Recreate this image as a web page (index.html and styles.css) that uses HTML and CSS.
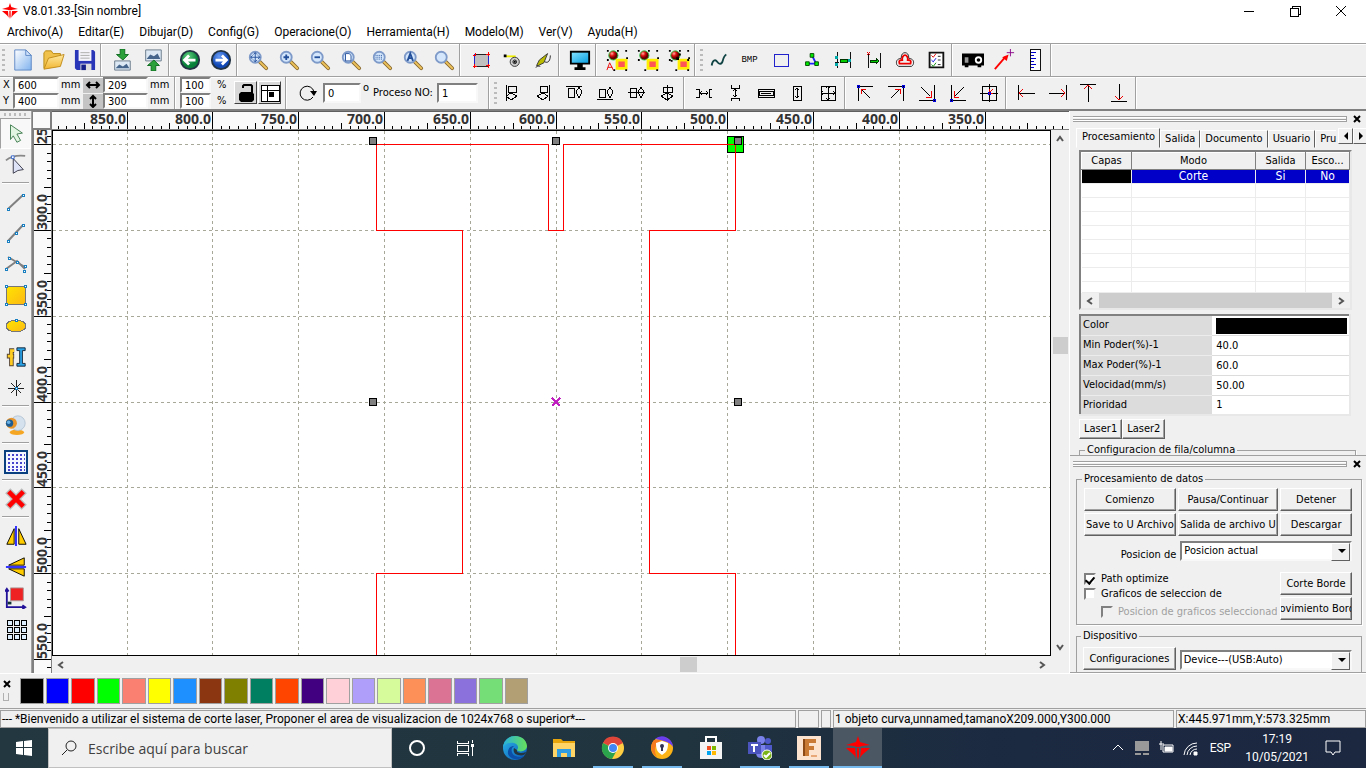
FILE: index.html
```html
<!DOCTYPE html>
<html lang="es">
<head>
  <meta charset="UTF-8">
  <title>V8.01.33-[Sin nombre]</title>
  <meta name="viewport" content="width=device-width, initial-scale=1">
  <link rel="stylesheet" href="styles.css">
</head>
<body>
<!-- Símbolos reutilizados -->
<svg class="defs" aria-hidden="true">
  <defs>
    <linearGradient id="gPage" x1="0" y1="0" x2="1" y2="1"><stop offset="0" stop-color="#fff"/><stop offset="1" stop-color="#7fb2ee"/></linearGradient>
    <linearGradient id="gFolder" x1="0" y1="0" x2="0" y2="1"><stop offset="0" stop-color="#ffe9a0"/><stop offset="1" stop-color="#f2b632"/></linearGradient>
    <linearGradient id="gYellow" x1="0" y1="0" x2="1" y2="1"><stop offset="0" stop-color="#ffe600"/><stop offset="1" stop-color="#fdb813"/></linearGradient>
    <linearGradient id="gScreen" x1="0" y1="0" x2="1" y2="1"><stop offset="0" stop-color="#7fe0ff"/><stop offset="1" stop-color="#0a9fe0"/></linearGradient>
    <radialGradient id="gRed" cx=".35" cy=".3"><stop offset="0" stop-color="#ffb0a0"/><stop offset=".5" stop-color="#e01010"/><stop offset="1" stop-color="#600"/></radialGradient>
    <radialGradient id="gGreen" cx=".4" cy=".3"><stop offset="0" stop-color="#5fd07f"/><stop offset="1" stop-color="#07803a"/></radialGradient>
    <radialGradient id="gBlue" cx=".4" cy=".3"><stop offset="0" stop-color="#6a9df5"/><stop offset="1" stop-color="#0f47b5"/></radialGradient>
    <linearGradient id="gEdge" x1="0" y1="0" x2="1" y2="1"><stop offset="0" stop-color="#2bb8e8"/><stop offset="1" stop-color="#0a55b5"/></linearGradient>
    <linearGradient id="gEdge2" x1="0" y1="0" x2="1" y2="0"><stop offset="0" stop-color="#27b0dc"/><stop offset="1" stop-color="#67e05a"/></linearGradient>
  </defs>
  <symbol id="lens" viewBox="0 0 24 24">
    <path d="M14 14l7 7" stroke="#8a6a30" stroke-width="4" stroke-linecap="round"/>
    <path d="M14 14l7 7" stroke="#eec35c" stroke-width="2" stroke-linecap="round"/>
    <circle cx="9" cy="9" r="6" fill="#d3e6fb" stroke="#7e9ac9" stroke-width="2"/>
  </symbol>
  <symbol id="star" viewBox="0 0 24 24">
    <path d="M12 0l2 6 10 3-8 1-3 1h-2l-3-1-8-1 10-3z" fill="#f00"/>
    <path d="M0 12h9l1 10C8 18 4 16 0 12zM24 12h-9l-1 10c2-4 6-6 10-10zM11 12h2v8l-1 4-1-4z" fill="#f00"/>
  </symbol>
  <symbol id="group" viewBox="0 0 24 24">
    <circle cx="8" cy="7" r="5" fill="url(#gRed)" stroke="#2c4" stroke-width="1"/>
    <path d="M12 12h10v9H12z" fill="#f55" stroke="#fe0" stroke-width="3"/>
    <path d="M1 1h2v2H1zM12 1h2v2h-2zM21 1h2v2h-2zM1 11h2v2H1zM22 9h2v2h-2zM8 22h2v2H8zM21 22h2v2h-2z"/>
  </symbol>
</svg>

<header class="titlebar">
  <svg class="app-logo" viewBox="0 0 24 24"><use href="#star"/></svg>
  <span class="title">V8.01.33-[Sin nombre]</span>
  <div class="window-buttons">
    <button aria-label="Minimizar"><svg viewBox="0 0 12 12"><path d="M1 6h10"/></svg></button>
    <button aria-label="Restaurar"><svg viewBox="0 0 12 12"><path d="M1 3h8v8H1zM3 3V1h8v8H9"/></svg></button>
    <button aria-label="Cerrar"><svg viewBox="0 0 12 12"><path d="M1 1l10 10M11 1L1 11" shape-rendering="auto"/></svg></button>
  </div>
</header>

<nav class="menu" aria-label="Menú principal">
  <a href="#">Archivo(A)</a><a href="#">Editar(E)</a><a href="#">Dibujar(D)</a><a href="#">Config(G)</a><a href="#">Operacione(O)</a><a href="#">Herramienta(H)</a><a href="#">Modelo(M)</a><a href="#">Ver(V)</a><a href="#">Ayuda(H)</a>
</nav>

<!-- Barra de herramientas estándar -->
<div class="toolbar">
  <i class="grip"></i>
  <button class="tool" aria-label="Nuevo"><svg viewBox="0 0 24 24"><path d="M3 1h12l6 6v16H3z" fill="url(#gPage)" stroke="#5b86c4"/><path d="M15 1v6h6z" fill="#cfe3fb" stroke="#5b86c4"/></svg></button>
  <button class="tool" aria-label="Abrir"><svg viewBox="0 0 24 24"><path d="M1 21V4l2-2h6l2 3h8v4" fill="#f0c24c" stroke="#b8860b"/><path d="M1 22L6 10l17-4-4 13z" fill="url(#gFolder)" stroke="#c08a18"/></svg></button>
  <button class="tool" aria-label="Guardar"><svg viewBox="0 0 24 24"><path d="M1 1h20l2 2v20H3l-2-2z" fill="#2a36b8"/><path d="M5 1h14v12H5z" fill="#f4f4fa"/><path d="M7 4h10M7 7h10M7 10h10" stroke="#aaa"/><path d="M7 16h12v7H7z" fill="#ddd"/><path d="M8 17h5v6H8z" fill="#16208a"/></svg></button>
  <i class="sep"></i>
  <button class="tool" aria-label="Importar"><svg viewBox="0 0 24 24"><path d="M4 13h17v10H4z" fill="#dce8f4" stroke="#678"/><path d="M5 21l4-4 4 2 4-3 3 5z" fill="#46658c"/><path d="M10 0h5v6h4l-6 6-7-6h4z" fill="#2ca03a" stroke="#0a6a1c"/></svg></button>
  <button class="tool" aria-label="Exportar"><svg viewBox="0 0 24 24"><path d="M4 1h17v12H4z" fill="#dce8f4" stroke="#678"/><path d="M5 11l4-5 4 2 4-3 3 6z" fill="#46658c"/><path d="M10 24h5v-6h4l-6-6-7 6h4z" fill="#2ca03a" stroke="#0a6a1c"/></svg></button>
  <i class="sep"></i>
  <button class="tool" aria-label="Deshacer"><svg viewBox="0 0 24 24"><circle cx="12" cy="12" r="10" fill="url(#gGreen)" stroke="#234" stroke-width="2"/><path d="M18 12H7M11 7l-5 5 5 5" fill="none" stroke="#fff" stroke-width="3"/></svg></button>
  <button class="tool" aria-label="Rehacer"><svg viewBox="0 0 24 24"><circle cx="12" cy="12" r="10" fill="url(#gBlue)" stroke="#234" stroke-width="2"/><path d="M6 12h11M13 7l5 5-5 5" fill="none" stroke="#fff" stroke-width="3"/></svg></button>
  <i class="sep"></i>
  <button class="tool" aria-label="Mover vista"><svg viewBox="0 0 24 24"><use href="#lens"/><path d="M9 4v10M4 9h10M7 6l2-2 2 2M7 12l2 2 2-2M6 7L4 9l2 2M12 7l2 2-2 2" fill="none" stroke="#234f9a"/></svg></button>
  <button class="tool" aria-label="Acercar"><svg viewBox="0 0 24 24"><use href="#lens"/><path d="M9 6v6M6 9h6" stroke="#234f9a" stroke-width="2"/></svg></button>
  <button class="tool" aria-label="Alejar"><svg viewBox="0 0 24 24"><use href="#lens"/><path d="M6 9h6" stroke="#234f9a" stroke-width="2"/></svg></button>
  <button class="tool" aria-label="Ver página"><svg viewBox="0 0 24 24"><use href="#lens"/><path d="M6 5h4l2 2v6H6z" fill="#fff" stroke="#234f9a"/></svg></button>
  <button class="tool" aria-label="Ver mesa"><svg viewBox="0 0 24 24"><use href="#lens"/><path d="M5 7h8M5 9h8M5 11h8" stroke="#234f9a" stroke-dasharray="1 1"/></svg></button>
  <button class="tool" aria-label="Ver todo"><svg viewBox="0 0 24 24"><use href="#lens"/><path d="M6 13l3-8 3 8M7 10h4" fill="none" stroke="#234f9a" stroke-width="2"/></svg></button>
  <button class="tool" aria-label="Zoom"><svg viewBox="0 0 24 24"><use href="#lens"/></svg></button>
  <i class="sep"></i>
  <button class="tool" aria-label="Marco"><svg viewBox="0 0 24 24" class="px"><path d="M5 6h14v12H5z" fill="#c0c0c0" stroke="#22c"/><path d="M6 6h13M6 18h13" stroke="#222"/><path d="M4 7h3M6 5v3M17 6h4M19 4v4M4 18h4M5 16v4M17 17h4M19 16v4" stroke="#f00"/></svg></button>
  <button class="tool" aria-label="Trayectoria"><svg viewBox="0 0 24 24"><path d="M5 8h11" stroke="#ee0" stroke-width="2"/><circle cx="15" cy="14" r="5" fill="#ccc" stroke="#333"/><circle cx="15" cy="14" r="2" fill="none" stroke="#111"/><path d="M3 6h3v3H3zM14 13h2v2h-2z"/></svg></button>
  <button class="tool" aria-label="Simular"><svg viewBox="0 0 24 24"><path d="M5 18l3-6 9-7-4 10-6 3z" fill="#bb0" stroke="#333"/><path d="M4 20c3-2 4-1 5-1M14 14c4 2 6-2 6-7" fill="none" stroke="#222"/></svg></button>
  <i class="sep"></i>
  <button class="tool" aria-label="Vista previa"><svg viewBox="0 0 24 24"><path d="M1 2h22v15H1zM9 17h6v3h3v3H6v-3h3z"/><path d="M3 4h18v11H3z" fill="url(#gScreen)"/></svg></button>
  <i class="sep"></i>
  <button class="tool" aria-label="Agrupar automático"><svg viewBox="0 0 24 24"><use href="#group"/><path d="M1 23l3-8 4 8M2 20h5" fill="none" stroke="#e00"/></svg></button>
  <button class="tool" aria-label="Agrupar"><svg viewBox="0 0 24 24"><use href="#group"/></svg></button>
  <button class="tool" aria-label="Desagrupar"><svg viewBox="0 0 24 24"><use href="#group"/><path d="M12 5h2v2h-2zM3 12h2v2H3zM9 9h3v3H9zM21 11h2v2h-2z"/></svg></button>
  <i class="sep"></i>
  <i class="grip"></i>
  <button class="tool" aria-label="Curva suave"><svg viewBox="0 0 24 24"><path d="M4 18c1-6 4-7 6-4s5 3 6-1 2-6 4-7" fill="none" stroke="#144" stroke-width="2"/></svg></button>
  <button class="tool bmp" aria-label="Mapa de bits">BMP</button>
  <button class="tool" aria-label="Rectángulo"><svg viewBox="0 0 24 24" class="px"><path d="M5 6h14v12H5z" fill="none" stroke="#22c"/></svg></button>
  <button class="tool" aria-label="Nodos"><svg viewBox="0 0 24 24"><path d="M12 7l4 8M7 16h10" stroke="#22f" stroke-width="2"/><path d="M10 5h4v4h-4zM5 14h4v4H5zM15 14h4v4h-4z" fill="#0e0" stroke="#040"/></svg></button>
  <button class="tool" aria-label="Separar"><svg viewBox="0 0 24 24" class="px"><path d="M6 4v16M19 4v16M4 14h4" stroke="#111"/><path d="M9 11h7v3H9z" fill="#0c0" stroke="#030"/><path d="M4 8h3v3H4zM4 15h3v3H4zM17 11h3v3h-3z" fill="#0aa"/></svg></button>
  <button class="tool" aria-label="Entrada"><svg viewBox="0 0 24 24" class="px"><path d="M6 5v15M18 5v15" stroke="#111"/><path d="M8 12h6v-2l3 3-3 3v-2H8z" fill="#0c0" stroke="#030"/><path d="M5 4l3 3M8 4L5 7" stroke="#e00"/></svg></button>
  <button class="tool" aria-label="Desfase"><svg viewBox="0 0 24 24"><path d="M8 10C7 2 17 2 16 10c5 1 6 3 5 7l-2 2H5l-2-2c-1-4 0-6 5-7z" fill="none" stroke="#222"/><path d="M9 12c-1-7 7-7 6 0 3 0 4 1 3 4H6c-1-3 0-4 3-4z" fill="none" stroke="#e00" stroke-width="2"/></svg></button>
  <button class="tool" aria-label="Comprobar"><svg viewBox="0 0 24 24"><path d="M5 4h15v16H5z" fill="#fff" stroke="#111" stroke-width="2"/><path d="M7 7l2 2 3-4" stroke="#d00" fill="none"/><path d="M7 12l2 2 3-4" stroke="#00d" fill="none"/><path d="M7 17l2 2 3-4" stroke="#080" fill="none"/><path d="M14 8h3M14 12h3M14 17h3" stroke="#222"/></svg></button>
  <i class="sep"></i>
  <button class="tool" aria-label="Láser"><svg viewBox="0 0 24 24"><path d="M0 5h24v13h-3v2h-4v-2H7v2H3v-2H0z"/><path d="M3 9h4v6H3z" fill="#999"/><circle cx="18" cy="12" r="4" fill="#fff"/><circle cx="18" cy="12" r="2"/></svg></button>
  <button class="tool" aria-label="Origen"><svg viewBox="0 0 24 24"><path d="M2 22L14 8" stroke="#f00" stroke-width="2"/><path d="M17 6l-7 3 5 4z" fill="#f00"/><path d="M19 0v8M15 4h8" stroke="#808"/></svg></button>
  <button class="tool" aria-label="Medir"><svg viewBox="0 0 24 24" class="px"><path d="M7 1h10v21H7z" fill="#fff" stroke="#111"/><path d="M8 4h5M8 7h3M8 10h5M8 13h3M8 16h5M8 19h3" stroke="#00c"/></svg></button>
  <i class="sep"></i>
</div>

<!-- Posición, tamaño y alineación -->
<div class="toolbar second">
  <div class="coords">
    <label for="posx">X</label><input id="posx" value="600"><span>mm</span>
    <button class="flat" aria-label="Ancho"><svg viewBox="0 0 16 14"><path d="M2 7h12M5 4L2 7l3 3M11 4l3 3-3 3" fill="none" stroke="#000" stroke-width="2"/></svg></button>
    <input aria-label="Ancho" value="209"><span>mm</span>
    <label for="posy">Y</label><input id="posy" value="400"><span>mm</span>
    <button class="flat" aria-label="Alto"><svg viewBox="0 0 16 14"><path d="M8 2v11M5 5l3-3 3 3M5 10l3 3 3-3" fill="none" stroke="#000" stroke-width="2"/></svg></button>
    <input aria-label="Alto" value="300"><span>mm</span>
  </div>
  <i class="sep"></i>
  <div class="percent">
    <input aria-label="Escala X" value="100"><span>%</span>
    <input aria-label="Escala Y" value="100"><span>%</span>
  </div>
  <button class="raised" aria-label="Bloquear proporción"><svg viewBox="0 0 20 20"><path d="M7 5V3l1-1h7l1 1v7" fill="none" stroke="#000" stroke-width="2"/><path d="M3 11l2-2h11l2 2v6l-2 2H5l-2-2z"/></svg></button>
  <button class="raised" aria-label="Punto de referencia"><svg viewBox="0 0 20 20" class="px"><path d="M1 2h18v16H1z" fill="#fff" stroke="#000"/><path d="M1 7h18M7 2v16" stroke="#000"/><path d="M9 9h5v5H9z"/></svg></button>
  <i class="sep"></i>
  <div class="rotate">
    <svg viewBox="0 0 20 20"><path d="M16 14a7 7 0 1 1 1-5" fill="none" stroke="#000"/><path d="M13 8h7l-3 5z"/></svg>
    <input aria-label="Ángulo" value="0"><span class="deg">o</span>
    <label for="proc">Proceso NO:</label><input id="proc" value="1">
  </div>
  <i class="sep"></i>
  <i class="grip"></i>
  <button class="tool" aria-label="Alinear izquierda"><svg viewBox="0 0 24 24" class="line"><path d="M6 4v16M8 5h8v6H8zM6 15l5-3 6 3-6 4z"/></svg></button>
  <button class="tool" aria-label="Alinear derecha"><svg viewBox="0 0 24 24" class="line"><path d="M18 4v16M9 5h7v6H9zM6 15l6-3 5 3-5 4z"/></svg></button>
  <button class="tool" aria-label="Alinear arriba"><svg viewBox="0 0 24 24" class="line"><path d="M4 5h16M6 7h6v9H6zM17 6l3 5-3 6-3-6z"/></svg></button>
  <button class="tool" aria-label="Alinear abajo"><svg viewBox="0 0 24 24" class="line"><path d="M4 18h16M6 8h6v8H6zM17 6l3 5-3 6-3-6z"/></svg></button>
  <button class="tool" aria-label="Centrar horizontal"><svg viewBox="0 0 24 24" class="line"><path d="M4 11h17M6 7h6v9H6zM17 6l3 5-3 6-3-6z"/></svg></button>
  <button class="tool" aria-label="Centrar vertical"><svg viewBox="0 0 24 24" class="line"><path d="M12 4v16M8 6h9v5H8zM6 15l6-3 6 3-6 4z"/></svg></button>
  <i class="sep"></i>
  <button class="tool" aria-label="Espaciado horizontal"><svg viewBox="0 0 24 24" class="line"><path d="M4 8h3v8H4M20 8h-3v8h3M8 12h8M10 10l-2 2 2 2M14 10l2 2-2 2"/></svg></button>
  <button class="tool" aria-label="Espaciado vertical"><svg viewBox="0 0 24 24" class="line"><path d="M8 4v3h8V4M8 20v-3h8v3M12 8v8M10 10l2-2 2 2M10 14l2 2 2-2"/></svg></button>
  <button class="tool" aria-label="Mismo ancho"><svg viewBox="0 0 24 24" class="line"><path d="M4 8h16v8H4zM5 10h14v4H5zM7 12h10"/></svg></button>
  <button class="tool" aria-label="Mismo alto"><svg viewBox="0 0 24 24" class="line"><path d="M8 5h8v14H8zM12 7v10M10 9l2-2 2 2M10 15l2 2 2-2"/></svg></button>
  <button class="tool" aria-label="Mismo tamaño"><svg viewBox="0 0 24 24" class="line"><path d="M5 5h14v14H5zM12 5v14M5 12h14M10 7l2-2 2 2M10 17l2 2 2-2M7 10l-2 2 2 2M17 10l2 2-2 2"/></svg></button>
  <i class="sep"></i>
  <button class="tool" aria-label="Superior izquierda"><svg viewBox="0 0 24 24" class="line"><path d="M5 20V5h15M17 17L9 9"/><path d="M8 13V8h5" stroke="#e00"/><path d="M4 4h2v2H4z" stroke="#00d"/></svg></button>
  <button class="tool" aria-label="Superior derecha"><svg viewBox="0 0 24 24" class="line"><path d="M4 5h15v15M7 17l8-8"/><path d="M11 8h5v5" stroke="#e00"/><path d="M18 4h2v2h-2z" stroke="#00d"/></svg></button>
  <button class="tool" aria-label="Inferior derecha"><svg viewBox="0 0 24 24" class="line"><path d="M19 4v15H4M6 6l9 9"/><path d="M16 10v6h-5" stroke="#e00"/><path d="M18 18h2v2h-2z" stroke="#00d"/></svg></button>
  <button class="tool" aria-label="Inferior izquierda"><svg viewBox="0 0 24 24" class="line"><path d="M5 4v15h15M18 6l-9 9"/><path d="M8 10v6h5" stroke="#e00"/><path d="M4 18h2v2H4z" stroke="#00d"/></svg></button>
  <button class="tool" aria-label="Al centro"><svg viewBox="0 0 24 24" class="line"><path d="M5 5h14v14H5zM12 3v18M3 12h18"/><path d="M12 12l4-4M12 8v4h4" stroke="#e00"/><path d="M11 11h2v2h-2z" stroke="#00d"/></svg></button>
  <i class="sep"></i>
  <button class="tool" aria-label="Mover a la izquierda"><svg viewBox="0 0 24 24" class="line"><path d="M4 4v15M5 12h16"/><path d="M9 8l-4 4 4 4" stroke="#e00"/></svg></button>
  <button class="tool" aria-label="Mover a la derecha"><svg viewBox="0 0 24 24" class="line"><path d="M21 4v15M4 12h16"/><path d="M16 8l4 4-4 4" stroke="#e00"/></svg></button>
  <button class="tool" aria-label="Mover arriba"><svg viewBox="0 0 24 24" class="line"><path d="M4 3h16M12 4v17"/><path d="M8 8l4-4 4 4" stroke="#e00"/></svg></button>
  <button class="tool" aria-label="Mover abajo"><svg viewBox="0 0 24 24" class="line"><path d="M4 20h16M12 3v16"/><path d="M8 15l4 4 4-4" stroke="#e00"/></svg></button>
  <i class="sep"></i>
</div>

<main class="main">
  <!-- Herramientas de dibujo -->
  <div class="sidebar">
    <i class="grip"></i>
    <button class="tool pressed" aria-label="Seleccionar"><svg viewBox="0 0 24 24"><path d="M6 2l13 9-6 1 4 7-4 2-4-7-3 4z" fill="#e2f5e2" stroke="#3c7a4c"/></svg></button>
    <button class="tool" aria-label="Editar nodos"><svg viewBox="0 0 24 24"><path d="M1 7c6-5 12-6 21-5" fill="none" stroke="#888" stroke-width="2"/><path d="M9 5l11 12-6 1-5 3z" fill="#dfe3f7" stroke="#334"/><path d="M7 2h3v3H7z" fill="#fff" stroke="#36c"/></svg></button>
    <i class="sep"></i>
    <button class="tool" aria-label="Línea"><svg viewBox="0 0 24 24" class="node"><path d="M4 19L19 5" class="seg"/><path d="M3 18h2v2H3zM18 4h2v2h-2z"/></svg></button>
    <button class="tool" aria-label="Polilínea"><svg viewBox="0 0 24 24" class="node"><path d="M4 20L19 4" class="seg"/><path d="M3 19h2v2H3zM11 11h2v2h-2zM18 3h2v2h-2z"/></svg></button>
    <button class="tool" aria-label="Curva"><svg viewBox="0 0 24 24" class="node"><path d="M2 17L13 9l8 8M4 5l17 10" class="seg"/><path d="M1 16h2v2H1zM4 5h2v2H4zM12 9h2v2h-2zM20 13h2v2h-2zM19 18h2v2h-2z"/></svg></button>
    <button class="tool" aria-label="Rectángulo"><svg viewBox="0 0 24 24" class="node"><path d="M2 3h19v18H2z" class="fill"/><path d="M1 2h2v2H1zM20 2h2v2h-2zM1 20h2v2H1zM20 20h2v2h-2z"/></svg></button>
    <button class="tool" aria-label="Elipse"><svg viewBox="0 0 24 24" class="node"><ellipse cx="12" cy="12" rx="10" ry="6" class="fill"/><path d="M11 5h2v2h-2z"/></svg></button>
    <button class="tool" aria-label="Texto"><svg viewBox="0 0 24 24"><path d="M13 2h9v3h-3v14h3v3h-9v-3h3V5h-3z" fill="#29a3e8" stroke="#123"/><path d="M10 5H7v17M2 11h8" stroke="#543" stroke-width="5" fill="none"/><path d="M10 5H7v16M3 11h6" stroke="#fc2" stroke-width="3" fill="none"/></svg></button>
    <button class="tool" aria-label="Punto"><svg viewBox="0 0 24 24" class="node"><path d="M12 4v16M4 12h16M7 7l10 10M17 7L7 17" stroke="#222"/><path d="M11 11h2v2h-2z"/></svg></button>
    <i class="sep"></i>
    <button class="tool" aria-label="Cámara"><svg viewBox="0 0 24 24"><ellipse cx="13" cy="20" rx="8" ry="3" fill="#f5a623"/><circle cx="14" cy="10" r="8" fill="#d5e2ee" stroke="#b3c3d3"/><circle cx="7" cy="10" r="6" fill="#e8952c"/><circle cx="5" cy="10" r="4" fill="#1d5d93"/><circle cx="4" cy="9" r="2" fill="#6ab2e6"/></svg></button>
    <i class="sep"></i>
    <button class="tool" aria-label="Rejilla"><svg viewBox="0 0 24 24" class="px"><path d="M1 1h22v22H1z" fill="#f4f7ff" stroke="#0a4080" stroke-width="2"/><path d="M4 5h17M4 9h17M4 13h17M4 17h17M4 20h17" stroke="#44c" stroke-width="2" stroke-dasharray="2 2"/></svg></button>
    <i class="sep"></i>
    <button class="tool" aria-label="Eliminar"><svg viewBox="0 0 24 24"><path d="M3 3l18 18M21 3L3 21" stroke="#bbb" stroke-width="8"/><path d="M4 4l16 16M20 4L4 20" stroke="#f00" stroke-width="5"/></svg></button>
    <i class="sep"></i>
    <button class="tool" aria-label="Espejo horizontal"><svg viewBox="0 0 24 24"><path d="M2 21L10 4v17zM23 21L15 4v17z" fill="#fc0" stroke="#000"/><path d="M12 1v22" stroke="#22f" stroke-width="2"/></svg></button>
    <button class="tool" aria-label="Espejo vertical"><svg viewBox="0 0 24 24"><path d="M21 2v8H4zM21 22v-8H4z" fill="#fc0" stroke="#000"/><path d="M1 12h22" stroke="#22f" stroke-width="2"/></svg></button>
    <button class="tool" aria-label="Origen"><svg viewBox="0 0 24 24"><path d="M6 1h14v14H6z" fill="#e22" stroke="#a99"/><path d="M2 3v19h19M0 5l2-3 2 3M19 20l3 2-3 2" fill="none" stroke="#219" stroke-width="2"/><path d="M3 16h4v3H3z" fill="#133"/></svg></button>
    <button class="tool" aria-label="Matriz"><svg viewBox="0 0 24 24" class="px"><path d="M3 3h5v5H3zM10 3h5v5h-5zM17 3h5v5h-5zM3 10h5v5H3zM10 10h5v5h-5zM17 10h5v5h-5zM3 17h5v5H3zM10 17h5v5h-5zM17 17h5v5h-5z" fill="#def" stroke="#000"/></svg></button>
  </div>

  <!-- Reglas y lienzo -->
  <section class="workspace">
    <div class="corner"></div>
    <svg class="ruler-x" id="rulerX"></svg>
    <svg class="ruler-y" id="rulerY"></svg>
    <div class="canvas">
      <svg>
        <g id="grid"></g>
        <g transform="translate(503 271)">
          <rect class="origin" x="171" y="-266" width="16" height="16"/>
          <path class="cut" d="M-180 -258H-8V-172H7V-258H179V-172H93V171H179V400"/>
          <path class="cut" d="M-180 -258V-172H-94V171H-180V400"/>
          <g class="handles">
            <rect x="-187" y="-265" width="7" height="7"/><rect x="-4" y="-265" width="7" height="7"/><rect x="178" y="-265" width="7" height="7"/>
            <rect x="-187" y="-4" width="7" height="7"/><rect x="178" y="-4" width="7" height="7"/>
          </g>
          <path class="center" d="M-4 -4L4 4M4 -4L-4 4"/>
        </g>
      </svg>
    </div>
    <div class="scroll vertical"><svg viewBox="0 0 10 10"><path d="M2 7l3-4 3 4"/></svg><i></i><svg viewBox="0 0 10 10"><path d="M2 3l3 4 3-4"/></svg></div>
    <div class="scroll horizontal"><svg viewBox="0 0 10 10"><path d="M7 2L3 5l4 3"/></svg><i></i><svg viewBox="0 0 10 10"><path d="M3 2l4 3-4 3"/></svg></div>
  </section>

  <aside class="dock">
    <section class="panel layers">
      <div class="panel-grip"><i></i><button aria-label="Cerrar panel"><svg viewBox="0 0 8 8"><path d="M1 1l6 6M7 1L1 7"/></svg></button></div>
      <div class="tabs">
        <button class="tab active">Procesamiento</button><button class="tab">Salida</button><button class="tab">Documento</button><button class="tab">Usuario</button><button class="tab">Pru</button>
        <div class="tab-scroll"><button aria-label="Anterior"><svg viewBox="0 0 8 8"><path d="M6 0v8L2 4z"/></svg></button><button aria-label="Siguiente"><svg viewBox="0 0 8 8"><path d="M2 0v8l4-4z"/></svg></button></div>
      </div>
      <div class="list">
        <table class="layer-table">
          <thead><tr><th>Capas</th><th>Modo</th><th>Salida</th><th>Esco...</th></tr></thead>
          <tbody>
            <tr class="selected"><td class="black"></td><td>Corte</td><td>Si</td><td>No</td></tr>
            <tr><td></td><td></td><td></td><td></td></tr>
            <tr><td></td><td></td><td></td><td></td></tr>
            <tr><td></td><td></td><td></td><td></td></tr>
            <tr><td></td><td></td><td></td><td></td></tr>
            <tr><td></td><td></td><td></td><td></td></tr>
            <tr><td></td><td></td><td></td><td></td></tr>
            <tr><td></td><td></td><td></td><td></td></tr>
            <tr class="last"><td></td><td></td><td></td><td></td></tr>
          </tbody>
        </table>
        <div class="scroll list-scroll"><svg viewBox="0 0 10 10"><path d="M7 2L3 5l4 3"/></svg><i></i><svg viewBox="0 0 10 10"><path d="M3 2l4 3-4 3"/></svg></div>
      </div>
      <table class="props">
        <tr><th>Color</th><td><div class="color-value"></div></td></tr>
        <tr><th>Min Poder(%)-1</th><td>40.0</td></tr>
        <tr><th>Max Poder(%)-1</th><td>60.0</td></tr>
        <tr><th>Velocidad(mm/s)</th><td>50.00</td></tr>
        <tr><th>Prioridad</th><td>1</td></tr>
      </table>
      <div class="lasers"><button class="btn">Laser1</button><button class="btn">Laser2</button></div>
      <fieldset class="group rowcol"><legend>Configuracion de fila/columna</legend></fieldset>
    </section>

    <section class="panel work">
      <div class="panel-grip"><i></i><button aria-label="Cerrar panel"><svg viewBox="0 0 8 8"><path d="M1 1l6 6M7 1L1 7"/></svg></button></div>
      <fieldset class="group">
        <legend>Procesamiento de datos</legend>
        <div class="actions">
          <button class="btn">Comienzo</button><button class="btn">Pausa/Continuar</button><button class="btn">Detener</button>
          <button class="btn">Save to U Archivo</button><button class="btn">Salida de archivo U</button><button class="btn">Descargar</button>
        </div>
        <div class="field">
          <label for="posicion">Posicion de</label>
          <div class="combo"><select id="posicion"><option>Posicion actual</option></select></div>
        </div>
        <div class="options">
          <div class="checks">
            <label><input type="checkbox" checked>Path optimize</label>
            <label><input type="checkbox">Graficos de seleccion de</label>
            <label class="off"><input type="checkbox" disabled>Posicion de graficos seleccionado</label>
          </div>
          <div class="borders">
            <button class="btn">Corte Borde</button>
            <button class="btn"><span>Movimiento Borde</span></button>
          </div>
        </div>
      </fieldset>
      <fieldset class="group device">
        <legend>Dispositivo</legend>
        <div class="field">
          <button class="btn">Configuraciones</button>
          <div class="combo"><select aria-label="Dispositivo"><option>Device---(USB:Auto)</option></select></div>
        </div>
      </fieldset>
    </section>
  </aside>
</main>

<div class="palette">
  <div class="palette-grip"><svg viewBox="0 0 8 8"><path d="M1 1l6 6M7 1L1 7"/></svg><i></i></div>
  <div class="swatches" id="swatches"></div>
</div>

<div class="status">
  <span class="message">--- *Bienvenido a utilizar el sistema de corte laser, Proponer el area de visualizacion de 1024x768 o superior*---</span>
  <span class="blank"></span><span class="blank small"></span>
  <span class="object">1 objeto curva,unnamed,tamanoX209.000,Y300.000</span>
  <span class="pointer">X:445.971mm,Y:573.325mm</span>
</div>

<footer class="taskbar">
  <button class="start" aria-label="Inicio"><svg viewBox="0 0 16 16"><path d="M0 2l7-1v6H0zM8 1l8-1v7H8zM0 8h7v7l-7-1zM8 8h8v8l-8-1z" fill="#fff"/></svg></button>
  <label class="search"><svg viewBox="0 0 16 16"><circle cx="10" cy="6" r="5"/><path d="M6 10l-5 5"/></svg><input type="text" placeholder="Escribe aquí para buscar" aria-label="Buscar"></label>
  <button class="app" aria-label="Cortana"><svg viewBox="0 0 24 24"><circle cx="12" cy="12" r="7" fill="none" stroke="#fff" stroke-width="2"/></svg></button>
  <button class="app" aria-label="Vista de tareas"><svg viewBox="0 0 24 24" class="px"><path d="M3 5v2h11V5M3 20v-3h11v3M3 9h11v6H3zM18 4v3M18 11v9" fill="none" stroke="#fff"/><path d="M17 8h3v3h-3z" fill="#fff"/></svg></button>
  <button class="app" aria-label="Edge"><svg viewBox="0 0 24 24"><circle cx="12" cy="12" r="12" fill="url(#gEdge)"/><path d="M0 11C2-4 23-3 24 10c0 5-7 7-10 4 2-2 1-6-3-7C6 6 2 8 0 11z" fill="url(#gEdge2)"/><path d="M9 12c-2 6 4 11 12 8-5 6-17 3-16-4 0-4 3-6 6-6z" fill="#0c4fa8"/><path d="M14 14c-1 3 5 4 9 2 0 3-4 4-8 3-4-1-5-4-4-7z" fill="#233640"/></svg></button>
  <button class="app" aria-label="Explorador"><svg viewBox="0 0 24 24"><path d="M1 3h8l2 2h12v16H1z" fill="#e8a50c"/><path d="M1 7h22v14H1z" fill="#ffd466"/><path d="M5 21v-8h14v8h-4v-4H9v4z" fill="#2f9be0"/></svg></button>
  <button class="app running" aria-label="Chrome"><svg viewBox="0 0 24 24"><circle cx="12" cy="12" r="11" fill="#ffce42"/><path d="M12 12L2 7a11 11 0 0 1 20 0z" fill="#e0453a"/><path d="M12 12L2 7a11 11 0 0 0 9 16l5-9z" fill="#2ba24c"/><circle cx="12" cy="12" r="5" fill="#fff"/><circle cx="12" cy="12" r="4" fill="#4285f4"/></svg></button>
  <button class="app running" aria-label="Navegador seguro"><svg viewBox="0 0 24 24"><circle cx="12" cy="12" r="11" fill="#fcb316"/><path d="M5 3a11 11 0 0 1 18 8c-3-5-11-7-18-8z" fill="#6a3df0"/><path d="M4 4a11 11 0 0 0 3 17C3 14 5 9 11 4z" fill="#f47b20"/><path d="M12 5l6 2c0 6-1 9-6 12-5-3-6-6-6-12z" fill="#fff"/><path d="M12 9v6" stroke="#335" stroke-width="2"/><circle cx="12" cy="10" r="2" fill="#335"/></svg></button>
  <button class="app" aria-label="Tienda"><svg viewBox="0 0 24 24"><path d="M7 6V1h10v5" fill="none" stroke="#fff" stroke-width="2"/><path d="M1 6h22v17H1z" fill="#f4f4f4"/><path d="M8 10h4v4H8z" fill="#f25022"/><path d="M13 10h4v4h-4z" fill="#7fba00"/><path d="M8 15h4v4H8z" fill="#00a4ef"/><path d="M13 15h4v4h-4z" fill="#ffb900"/></svg></button>
  <button class="app running" aria-label="Teams"><svg viewBox="0 0 24 24"><circle cx="13" cy="4" r="4" fill="#7b83eb"/><circle cx="20" cy="5" r="3" fill="#5059c9"/><path d="M8 9h11v13h-6c-4 0-5-3-5-6z" fill="#7b83eb"/><path d="M17 9h7v8c0 3-4 5-7 4z" fill="#5059c9"/><path d="M0 6h13v12H0z" fill="#4b53bc"/><path d="M3 9h7M6 9v7" stroke="#fff" stroke-width="2"/><circle cx="19" cy="19" r="5" fill="#7ab317" stroke="#fff"/><path d="M16 19l2 2 4-4" fill="none" stroke="#fff" stroke-width="2"/></svg></button>
  <button class="app running" aria-label="Fusion"><svg viewBox="0 0 24 24"><path d="M0 0h24v24H0z" fill="#fbe3d0"/><path d="M8 3h11v4h-7v3h5v4h-5v6H8z" fill="#c97a34"/><path d="M6 3h2v17H6z" fill="#8d4a17"/><path d="M14 20h6" stroke="#e8a878" stroke-width="2"/></svg></button>
  <button class="app running current" aria-label="Corte láser"><svg viewBox="0 0 24 24"><use href="#star"/></svg></button>
  <div class="tray">
    <button aria-label="Iconos ocultos"><svg viewBox="0 0 16 16"><path d="M3 10l5-5 5 5"/></svg></button>
    <svg viewBox="0 0 16 16"><path d="M1 1h14v10H1zM1 13h6v2H1zM9 13h6v2H9z" fill="#999" stroke="none"/></svg>
    <svg viewBox="0 0 16 16"><path d="M5 5h10v7H5zM1 4h5M3 1v9"/><path d="M7 7h7v4H7z" fill="#fff"/></svg>
    <svg viewBox="0 0 16 16"><path d="M2 15A13 13 0 0 1 15 3M5 15A10 10 0 0 1 15 6M8 15A7 7 0 0 1 15 9"/><path d="M12 12h3v3h-3z" fill="#fff"/></svg>
    <span class="lang">ESP</span>
    <div class="clock"><span>17:19</span><span>10/05/2021</span></div>
    <button class="notes" aria-label="Notificaciones"><svg viewBox="0 0 16 16"><path d="M1 1h14v11h-5l-2 3-2-3H1z"/></svg></button>
  </div>
</footer>

<script>
  // Escala del lienzo: píxeles por milímetro
  const SCALE = 1.716;

  // Colores de capa
  const colors = ['#000000', '#0000ff', '#ff0000', '#00ff00', '#fa8072', '#ffff00', '#1e90ff', '#8b3610', '#808000', '#008060',
    '#ff4500', '#400080', '#ffd0d8', '#b09ffa', '#d6fb9b', '#fc9058', '#db7395', '#8a71dc', '#76de76', '#b29f74'];
  colors.forEach(color => {
    const b = document.createElement('button');
    b.setAttribute('aria-label', 'Capa ' + color);
    b.style.background = color;
    document.getElementById('swatches').appendChild(b);
  });

  function line(parent, x1, y1, x2, y2) {
    const el = document.createElementNS('http://www.w3.org/2000/svg', 'path');
    el.setAttribute('d', `M${x1} ${y1}L${x2} ${y2}`);
    parent.appendChild(el);
  }

  function label(parent, text, x, y, vertical) {
    const el = document.createElementNS('http://www.w3.org/2000/svg', 'text');
    el.textContent = text.toFixed(1);
    if (vertical) {
      el.setAttribute('transform', `translate(${x} ${y}) rotate(-90)`);
    } else {
      el.setAttribute('x', x);
      el.setAttribute('y', y);
      el.setAttribute('text-anchor', 'end');
    }
    parent.appendChild(el);
  }

  const grid = document.getElementById('grid');
  const rulerX = document.getElementById('rulerX');
  const rulerY = document.getElementById('rulerY');
  const view = document.querySelector('.canvas').getBoundingClientRect();

  // Regla horizontal: los valores decrecen hacia la derecha
  for (let v = 890; v > 0; v -= 5) {
    const x = Math.floor(503 + (600 - v) * SCALE);
    if (x > view.width + 14) break;
    if (v % 50 === 0) {
      line(rulerX, x + 1, 0, x + 1, 17);
      label(rulerX, v, x, 12, false);
      if (x < view.width) line(grid, x, 0, x, view.height);
    } else {
      line(rulerX, x + 1, v % 25 === 0 ? 11 : 14, x + 1, 17);
    }
  }

  // Regla vertical
  for (let v = 245; v < 2000; v += 5) {
    const y = Math.floor(271 + (v - 400) * SCALE);
    if (y > view.height + 17) break;
    if (v % 50 === 0) {
      line(rulerY, 0, y + 1, 17, y + 1);
      label(rulerY, v, 13, y + 1, true);
      line(grid, 0, y, view.width, y);
    } else {
      line(rulerY, v % 25 === 0 ? 10 : 13, y + 1, 17, y + 1);
    }
  }
</script>
</body>
</html>
```
FILE: styles.css
```css
* {
  box-sizing: border-box;
}
body {
  margin: 0;
  height: 100vh;
  display: flex;
  flex-direction: column;
  overflow: hidden;
  background: #f0f0f0;
  font-family: "DejaVu Sans Condensed", Tahoma, "Open Sans", sans-serif;
  font-size: 11px;
  line-height: 14px;
  color: #000;
}
button, input, select {
  font: inherit;
  color: inherit;
  margin: 0;
  padding: 0;
  border: 0;
  border-radius: 0;
  background: none;
}
svg {
  display: block;
  flex: none;
}
.defs {
  position: absolute;
  width: 0;
  height: 0;
}
.px {
  shape-rendering: crispEdges;
}
.line {
  fill: none;
  stroke: #000;
  shape-rendering: crispEdges;
}

/* Título y menú */
.titlebar {
  flex: 0 0 21px;
  display: flex;
  align-items: center;
  gap: 5px;
  padding-left: 2px;
  background: #fff;
  font: 12px Roboto, "Open Sans", sans-serif;
}
.app-logo {
  width: 16px;
  height: 16px;
}
.window-buttons {
  margin-left: auto;
  padding-right: 2px;
  display: flex;
}
.window-buttons button {
  width: 46px;
  height: 20px;
  display: grid;
  place-items: center;
}
.window-buttons svg {
  width: 12px;
  height: 12px;
  fill: none;
  stroke: #000;
  shape-rendering: crispEdges;
}
.menu {
  flex: 0 0 22px;
  display: flex;
  align-items: center;
  gap: 15px;
  padding-left: 7px;
  background: #fff;
  font: 12px Roboto, "Open Sans", sans-serif;
}
.menu a {
  color: #000;
  text-decoration: none;
}

/* Barras de herramientas */
.toolbar {
  flex: 0 0 33px;
  display: flex;
  align-items: stretch;
  border-top: 1px solid #a0a0a0;
  box-shadow: inset 0 1px #fff;
}
.toolbar.second {
  flex-basis: 34px;
  border-bottom: 2px solid #808080;
}
.tool {
  flex: 0 0 31px;
  height: 31px;
  display: grid;
  place-items: center;
}
.tool svg {
  width: 22px;
  height: 22px;
}
.second .tool svg,
.tool .px,
.tool .node {
  width: 24px;
  height: 24px;
}
.bmp {
  font: 9px "Liberation Mono", monospace;
}
.sep {
  flex: 0 0 6px;
  border-left: 1px solid #a0a0a0;
  box-shadow: inset 1px 0 #fff;
}
.grip {
  flex: 0 0 3px;
  margin: 5px 2px;
  background: repeating-linear-gradient(#bbb 0 2px, transparent 2px 5px);
}
.sep + .grip {
  margin: 5px 0;
}
.toolbar input,
.combo {
  background: #fff;
  border: 2px solid;
  border-color: #808080 #f8f8f8 #f8f8f8 #808080;
}
.toolbar input {
  min-width: 0;
  padding-left: 3px;
}
.coords {
  display: grid;
  grid-template-columns: 10px 46px 24px 20px 45px 26px;
  grid-template-rows: 16px 16px;
  align-items: center;
  padding-left: 3px;
}
.coords input,
.percent input {
  height: 16px;
}
.coords span {
  padding-left: 2px;
}
.flat {
  height: 15px;
  display: grid;
  place-items: center;
  background: #c4c4c4;
}
.flat svg {
  width: 16px;
  height: 14px;
}
.percent {
  display: grid;
  grid-template-columns: 31px 22px;
  grid-template-rows: 16px 16px;
  align-items: center;
}
.percent span {
  padding-left: 6px;
}
.raised {
  width: 23px;
  height: 23px;
  margin: 4px 0 0 1px;
  display: grid;
  place-items: center;
  border: 1px solid;
  border-color: #fff #404040 #404040 #fff;
  background: #d8d8d8;
}
.raised svg {
  width: 20px;
  height: 20px;
}
.raised + .sep {
  margin-left: 4px;
}
.rotate {
  display: flex;
  align-items: center;
  padding-left: 6px;
}
.rotate svg {
  width: 20px;
  height: 20px;
}
.rotate input {
  width: 38px;
  height: 20px;
  margin-left: 6px;
}
.rotate #proc {
  width: 41px;
  margin: 0 10px 0 4px;
}
.deg {
  align-self: flex-start;
  padding: 4px 4px 0 2px;
}

/* Zona principal */
.main {
  flex: 1;
  min-height: 0;
  display: flex;
}
.sidebar {
  flex: 0 0 32px;
  display: flex;
  flex-direction: column;
  border-right: 1px solid #a0a0a0;
}
.sidebar .tool {
  width: 31px;
  flex-basis: 31px;
}
.sidebar .sep {
  margin: 0 2px;
  border: 0;
  box-shadow: none;
  background: linear-gradient(transparent 2px, #a0a0a0 2px 3px, #fff 3px 4px, transparent 4px);
}
.sidebar .grip {
  margin: 2px 4px;
  background: repeating-linear-gradient(90deg, #bbb 0 2px, transparent 2px 5px);
}
.pressed {
  background: #f8f8f8;
  border: 1px solid;
  border-color: #a0a0a0 #fff #fff #a0a0a0;
}
.node {
  fill: #fff;
  stroke: #1a7fc0;
  shape-rendering: crispEdges;
}
.node .seg {
  fill: none;
  stroke: #808080;
  stroke-width: 2px;
  shape-rendering: auto;
}
.node .fill {
  fill: url(#gYellow);
  stroke: #777;
}
.workspace {
  flex: 1;
  min-width: 0;
  display: grid;
  grid-template-columns: 20px minmax(0, 1fr) 18px;
  grid-template-rows: 19px minmax(0, 1fr) 17px;
}
.corner {
  border: 1px solid #808080;
  border-bottom-width: 2px;
  border-right-width: 2px;
  background: #fafafa;
}
.ruler-x,
.ruler-y {
  width: 100%;
  height: 100%;
  background: #fafafa;
  font: bold 14px "Open Sans", sans-serif;
  fill: #333;
  overflow: hidden;
}
.ruler-x {
  grid-column: 2 / 4;
  border-top: 1px solid #606060;
  border-bottom: 1px solid #808080;
}
.ruler-y {
  grid-row: 2 / 4;
  border-left: 2px solid #808080;
  border-right: 1px solid #808080;
}
.ruler-x path,
.ruler-y path {
  stroke: #000;
  shape-rendering: crispEdges;
}
.canvas {
  grid-area: 2 / 2;
  border: 1px solid #000;
  background: #fff;
}
.canvas svg {
  width: 100%;
  height: 100%;
  overflow: hidden;
  shape-rendering: crispEdges;
}
#grid path {
  stroke: #a8a898;
  stroke-dasharray: 3 3;
}
.cut {
  fill: none;
  stroke: #f00;
}
.origin {
  fill: #0f0;
  stroke: #000;
}
.handles rect {
  fill: #808080;
  stroke: #000;
}
.center {
  stroke: #c020c0;
  stroke-width: 2px;
}
.scroll {
  display: flex;
  align-items: center;
  padding: 4px;
}
.scroll svg {
  width: 10px;
  height: 10px;
  fill: none;
  stroke: #555;
  stroke-width: 2px;
}
.scroll i {
  background: #cdcdcd;
}
.vertical {
  grid-area: 2 / 3;
  flex-direction: column;
}
.vertical i {
  width: 15px;
  height: 17px;
  margin: 193px 0 auto;
}
.horizontal {
  grid-area: 3 / 2;
}
.horizontal i {
  width: 17px;
  height: 15px;
  margin: 0 auto 0 62%;
}

/* Paneles de la derecha */
.dock {
  flex: 0 0 297px;
  display: flex;
  flex-direction: column;
  border-left: 1px solid #fff;
}
.panel {
  padding: 0 4px 0 6px;
}
.layers {
  flex: 1;
  min-height: 0;
  overflow: hidden;
}
.work {
  border-top: 1px solid #a0a0a0;
  border-bottom: 1px solid #a0a0a0;
}
.panel-grip {
  height: 16px;
  margin-left: -3px;
  display: flex;
  align-items: center;
  gap: 6px;
}
.panel-grip i {
  flex: 1;
  height: 6px;
  border: 1px solid #a0a0a0;
  border-left: 0;
  background: linear-gradient(#fff 1px, #f0f0f0 1px 2px, #a0a0a0 2px 3px, #fff 3px);
}
.panel-grip button {
  width: 9px;
}
.panel-grip svg,
.palette-grip svg {
  width: 8px;
  height: 8px;
  stroke: #000;
  stroke-width: 2px;
}
.tabs {
  height: 20px;
  margin-top: 1px;
  display: flex;
  align-items: flex-end;
  position: relative;
}
.tab {
  height: 18px;
  padding: 0 4px;
  border: 1px solid;
  border-color: #fff #606060 transparent #fff;
  white-space: nowrap;
}
.tab:last-of-type {
  border-right: 0;
  padding-right: 0;
}
.tab.active {
  height: 20px;
  padding: 0 4px 3px 5px;
}
.tab-scroll {
  position: absolute;
  right: -6px;
  top: 0;
  display: flex;
}
.tab-scroll button {
  width: 15px;
  height: 16px;
  display: grid;
  place-items: center;
  background: #f0f0f0;
  border: 1px solid;
  border-color: #fff #606060 #606060 #fff;
}
.tab-scroll svg {
  width: 8px;
  height: 8px;
}
.list {
  margin: 2px 10px 0 3px;
  border: 2px solid;
  border-color: #808080 #e8e8e8 #e8e8e8 #808080;
  background: #fff;
}
.layer-table {
  width: 100%;
  table-layout: fixed;
  border-collapse: collapse;
}
.layer-table th {
  width: 50px;
  height: 17px;
  padding: 0;
  font-weight: normal;
  background: #f0f0f0;
  border: 1px solid;
  border-color: #fff #808080 #808080 #fff;
}
.layer-table th:nth-child(2) {
  width: auto;
}
.layer-table th:nth-child(4) {
  width: 44px;
}
.layer-table td {
  height: 14px;
  padding: 0;
  text-align: center;
  border-right: 1px solid #ececec;
  border-bottom: 1px solid #ececec;
  font: 12px/13px "DejaVu Sans Condensed", sans-serif;
}
.layer-table .last td {
  height: 11px;
}
.selected td {
  background: #0000c8;
  color: #fff;
}
.selected .black {
  background: #000;
}
.list-scroll {
  height: 15px;
  background: #f0f0f0;
  gap: 4px;
}
.list-scroll i {
  flex: 1;
  height: 15px;
}
.props {
  width: 272px;
  margin: 4px 0 0 3px;
  border-collapse: collapse;
  border: 2px solid;
  border-color: #808080 #e8e8e8 #e8e8e8 #808080;
  background: #fff;
}
.props th {
  width: 49%;
  height: 20px;
  padding: 0 2px;
  text-align: left;
  font-weight: normal;
  background: #dcdcdc;
  border-bottom: 1px solid #ececec;
}
.props td {
  padding: 1px 2px 0 4px;
  border-bottom: 1px solid #dcdcdc;
}
.color-value {
  height: 16px;
  background: #000;
}
.btn {
  height: 23px;
  overflow: hidden;
  white-space: nowrap;
  border: 1px solid;
  border-color: #fff #606060 #606060 #fff;
  box-shadow: inset -1px -1px #a0a0a0;
}
.lasers {
  display: flex;
  padding: 3px 0 0 3px;
}
.lasers .btn {
  height: 20px;
  padding: 0 4px;
}
.group {
  min-width: 0;
  margin: 0;
  padding: 2px 9px 4px 7px;
  border: 1px solid #a0a0a0;
  box-shadow: 1px 1px #fff;
}
.group legend {
  margin-left: -2px;
  padding: 0 2px;
}
.rowcol {
  margin: 4px 6px 0 3px;
  height: 40px;
}
.actions {
  display: grid;
  grid-template-columns: 92fr 101fr 72fr;
  gap: 2px;
}
.field {
  display: grid;
  grid-template-columns: 92fr 171fr;
  gap: 4px;
  margin-top: 5px;
}
.field label {
  text-align: right;
  padding-top: 7px;
}
.combo {
  position: relative;
  height: 20px;
}
.combo select {
  display: block;
  width: 100%;
  height: 16px;
  padding-left: 2px;
  appearance: none;
}
.combo::after {
  content: "";
  position: absolute;
  top: 0;
  right: 0;
  width: 17px;
  height: 16px;
  border: 1px solid;
  border-color: #fff #606060 #606060 #fff;
  background: #f0f0f0;
  pointer-events: none;
}
.combo::before {
  content: "";
  position: absolute;
  z-index: 1;
  top: 6px;
  right: 4px;
  border: 4px solid transparent;
  border-top-color: #000;
  border-bottom: 0;
  pointer-events: none;
}
.options {
  display: grid;
  grid-template-columns: minmax(0, 1fr) 72px;
  gap: 3px;
  margin-top: 10px;
}
.checks {
  display: flex;
  flex-direction: column;
  gap: 1px;
  min-width: 0;
}
.checks label {
  display: flex;
  align-items: center;
  gap: 5px;
  overflow: hidden;
  white-space: nowrap;
}
.checks input {
  flex: none;
  appearance: none;
  width: 12px;
  height: 12px;
  display: grid;
  place-items: center;
  background: #fff;
  border: 2px solid;
  border-color: #808080 #f0f0f0 #f0f0f0 #808080;
}
.checks input:checked::after {
  content: "";
  width: 4px;
  height: 7px;
  border: solid #000;
  border-width: 0 2px 2px 0;
  transform: rotate(40deg);
}
.checks .off {
  margin: 3px 0 0 17px;
  color: #a0a0a0;
}
.off input {
  background: #f0f0f0;
}
.borders {
  display: grid;
  gap: 2px;
}
.borders .btn {
  display: flex;
  align-items: center;
  justify-content: center;
}
.device {
  margin-top: 4px;
  padding: 4px 9px 2px 6px;
  border-bottom: 0;
  box-shadow: none;
}
.device .field {
  margin: 0;
}
.device .combo {
  align-self: end;
}

/* Paleta y estado */
.palette {
  flex: 0 0 36px;
  display: flex;
  align-items: center;
  gap: 10px;
  padding-left: 3px;
  border-bottom: 1px solid #a0a0a0;
  box-shadow: inset 0 1px #fff;
}
.palette-grip {
  width: 7px;
  display: grid;
  gap: 5px;
}
.palette-grip i {
  width: 6px;
  height: 8px;
  border: 1px solid #b0b0b0;
  border-top: 0;
}
.swatches {
  display: flex;
  gap: 2px;
  width: 508px;
}
.swatches button {
  flex: 1;
  height: 26px;
  border: 1px solid #a0a0a0;
}
.status {
  flex: 0 0 19px;
  display: flex;
  gap: 2px;
  padding-top: 1px;
  font: 12px/16px Roboto, "Open Sans", sans-serif;
}
.status span {
  border: 1px solid #a0a0a0;
  padding-left: 1px;
  white-space: nowrap;
  overflow: hidden;
}
.message {
  flex: 1;
}
.blank {
  flex: 0 0 21px;
}
.status .small {
  flex-basis: 10px;
}
.object {
  flex: 0 0 341px;
}
.pointer {
  flex: 0 0 190px;
}

/* Barra de tareas */
.taskbar {
  flex: 0 0 40px;
  display: flex;
  background: linear-gradient(90deg, #223740, #20343f 50%, #1b2941 75%, #1c2740);
  color: #fff;
  font: 12px/18px Roboto, "Open Sans", sans-serif;
}
.start {
  width: 48px;
  display: grid;
  place-items: center;
}
.start svg {
  width: 16px;
  height: 16px;
}
.search {
  width: 344px;
  display: flex;
  align-items: center;
  gap: 11px;
  padding-left: 12px;
  background: #f0f0f0;
  border: 1px solid #c0c0c0;
}
.search svg {
  width: 16px;
  height: 16px;
  fill: none;
  stroke: #222;
}
.search input {
  flex: 1;
  min-width: 0;
  font: 14px "Open Sans", sans-serif;
  outline: 0;
}
.search input::placeholder {
  color: #404040;
  opacity: 1;
}
.app {
  width: 49px;
  display: grid;
  place-items: center;
}
.app svg {
  width: 24px;
  height: 24px;
}
.running {
  background: linear-gradient(#76b9ed, #76b9ed) center bottom / 40px 2px no-repeat;
}
.running.current {
  background: linear-gradient(#4b5863 38px, #76b9ed 38px);
}
.tray {
  margin-left: auto;
  display: flex;
  align-items: center;
  gap: 8px;
  padding-right: 25px;
}
.tray svg {
  width: 16px;
  height: 16px;
  fill: none;
  stroke: #fff;
}
.lang {
  padding: 0 2px 0 4px;
}
.clock {
  display: grid;
  margin-left: 4px;
  text-align: center;
}
.notes {
  margin-left: 8px;
}
```
